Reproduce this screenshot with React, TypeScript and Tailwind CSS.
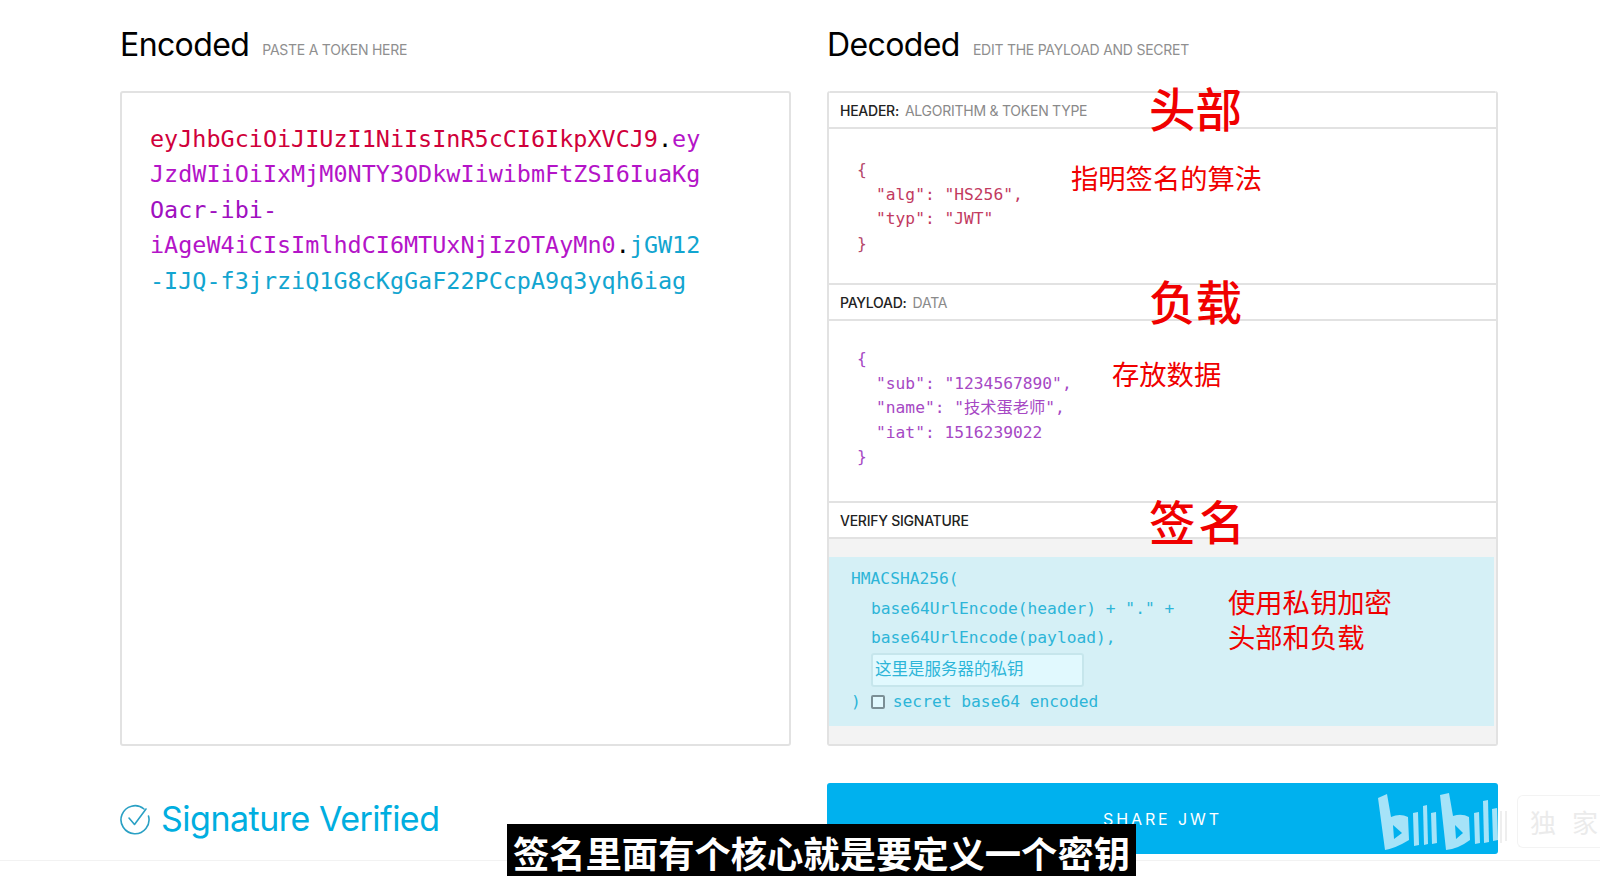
import React from "react";

const mono = "font-['DejaVu_Sans_Mono','Noto_Sans_CJK_SC',monospace]";
const sans = "font-['Inter','Noto_Sans_CJK_SC',sans-serif]";
const cjk = "font-['Noto_Sans_CJK_SC',sans-serif]";

const SectionHead = ({ title, sub }: { title: string; sub?: string }) => (
  <div className="h-[38px] shrink-0 flex items-center px-[11px] border-y-2 border-[#e2e2e2] bg-white text-[14px] tracking-[-0.25px]">
    <span className="text-[#222] font-medium">{title}</span>
    {sub && <span className="ml-[6px] text-[#8a8a8a]">{sub}</span>}
  </div>
);

const Heading = ({ title, sub }: { title: string; sub: string }) => (
  <div className={`h-[91px] flex items-end pb-[30px] ${sans}`}>
    <h2 className="text-[32px] leading-[32px] text-black tracking-[-0.6px]">{title}</h2>
    <span className="ml-[13px] mb-[2px] text-[14px] leading-[18px] text-[#8f8f8f] tracking-[-0.25px]">{sub}</span>
  </div>
);

const BiliLogo = () => (
  <svg width="120" height="58" viewBox="0 0 120 58" fill="#a6e3f8" className="absolute right-0 top-[10px] overflow-visible">
    <path d="M0 5 L9 1 L13 24 Q22 20 30 24 L31 47 Q18 55 7 57 Z M15 32 L16 46 L24 40 Z" fillRule="evenodd" />
    <path d="M35 20 L40 19 L41 52 L36 53 Z" />
    <path d="M45 13 L49 12 L50 51 L46 52 Z" />
    <path d="M53 20 L58 19 L59 50 L54 51 Z" />
    <path d="M62 2 L71 0 L75 23 Q84 20 91 24 L92 47 Q80 56 68 57 Z M77 32 L78 46 L85 40 Z" fillRule="evenodd" />
    <path d="M96 20 L101 19 L102 50 L97 51 Z" />
    <path d="M105 8 L110 7 L111 49 L106 50 Z" />
    <path d="M114 16 L119 15 L120 47 L115 48 Z" />
    <path d="M122 18 L124 18 L124 50 L122 50 Z M127 18 L129 18 L129 48 L127 48 Z" fill="#eeeeee" />
  </svg>
);

export default function App() {
  return (
    <div className="relative h-[876px] w-full overflow-hidden bg-white">
      <div className="grid grid-cols-[671px_671px] gap-x-[36px] pl-[120px]">
        <div>
          <Heading title="Encoded" sub="PASTE A TOKEN HERE" />
          <div className={`h-[655px] rounded-[3px] border-2 border-[#e2e2e2] pt-[29px] pl-[28px] text-[23.45px] leading-[35.4px] ${mono}`}>
            <div><span className="text-[#d0003a]">eyJhbGciOiJIUzI1NiIsInR5cCI6IkpXVCJ9</span><span className="text-black">.</span><span className="text-[#b414c8]">ey</span></div>
            <div className="text-[#b414c8]">JzdWIiOiIxMjM0NTY3ODkwIiwibmFtZSI6IuaKg</div>
            <div className="text-[#a010c0]">Oacr-ibi-</div>
            <div><span className="text-[#b414c8]">iAgeW4iCIsImlhdCI6MTUxNjIzOTAyMn0</span><span className="text-black">.</span><span className="text-[#12a5d0]">jGW12</span></div>
            <div className="text-[#12a5d0]">-IJQ-f3jrziQ1G8cKgGaF22PCcpA9q3yqh6iag</div>
          </div>
        </div>

        <div>
          <Heading title="Decoded" sub="EDIT THE PAYLOAD AND SECRET" />
          <div className={`h-[655px] flex flex-col overflow-hidden rounded-[3px] border-x-2 border-b-2 border-[#e2e2e2] ${sans}`}>
            <SectionHead title="HEADER:" sub="ALGORITHM & TOKEN TYPE" />
            <div className={`h-[154px] shrink-0 pt-[29px] pl-[28px] text-[16.25px] leading-[24.6px] text-[#c23a5f] ${mono}`}>
              <div className="text-[#b5476a]">{"{"}</div>
              <div className="pl-[19px]">"alg": "HS256",</div>
              <div className="pl-[19px]">"typ": "JWT"</div>
              <div className="text-[#b5476a]">{"}"}</div>
            </div>
            <SectionHead title="PAYLOAD:" sub="DATA" />
            <div className={`h-[180px] shrink-0 pt-[26px] pl-[28px] text-[16.25px] leading-[24.6px] text-[#a648c4] ${mono}`}>
              <div>{"{"}</div>
              <div className="pl-[19px]">"sub": "1234567890",</div>
              <div className="pl-[19px]">"name": "技术蛋老师",</div>
              <div className="pl-[19px]">"iat": 1516239022</div>
              <div>{"}"}</div>
            </div>
            <SectionHead title="VERIFY SIGNATURE" />
            <div className="h-[205px] shrink-0 bg-[#f3f3f3] pt-[18px] pb-[18px] pr-[2px]">
              <div className={`h-[169px] bg-[#d5f0f6] pl-[22px] pt-[7px] text-[16.25px] leading-[29.6px] text-[#2db5d8] ${mono}`}>
                <div>HMACSHA256(</div>
                <div className="pl-[20px]">base64UrlEncode(header) + "." +</div>
                <div className="pl-[20px]">base64UrlEncode(payload),</div>
                <div className="ml-[20px] flex h-[34px] w-[213px] items-center rounded-[3px] border-2 border-[#c6e6ec] bg-[#e1f9fe] pl-[2px] text-[16.5px]">这里是服务器的私钥</div>
                <div className="flex items-center">
                  <span>)</span>
                  <span className="ml-[10px] mr-[8px] h-[14px] w-[14px] rounded-[2px] border-2 border-[#7b8f95] bg-[#e1f9fe]" />
                  <span>secret base64 encoded</span>
                </div>
              </div>
            </div>
          </div>
        </div>

        <div className={`mt-[37px] flex h-[71px] items-center ${sans}`}>
          <svg width="30" height="32" viewBox="0 0 30 32" fill="none" stroke="#2aa0c4" strokeWidth="1.6" strokeLinecap="round" strokeLinejoin="round">
            <path d="M24 6 A14 14 0 1 0 28.5 13" />
            <path d="M9 15 L14.5 21.5 L26 6" />
          </svg>
          <span className="ml-[11px] text-[34px] leading-[40px] tracking-[-0.5px] text-[#00aee0]">Signature Verified</span>
        </div>

        <div className="relative mt-[37px]">
          <div className={`flex h-[71px] items-center justify-center rounded-[3px] bg-[#00b1ee] text-[16px] tracking-[2.9px] text-white ${sans}`}>
            SHARE JWT
          </div>
          <BiliLogo />
        </div>
      </div>

      <div className="absolute inset-x-0 top-[860px] border-t border-[#f2f2f2]" />

      {/* red annotations drawn over the page */}
      <div className={`text-[#f00000] ${cjk}`}>
        <span className="absolute left-[1149px] top-[72px] text-[46.5px] font-medium leading-[70px]">头部</span>
        <span className="absolute left-[1071px] top-[157px] text-[27.3px] leading-[40px]">指明签名的算法</span>
        <span className="absolute left-[1149px] top-[265px] text-[46.5px] font-medium leading-[70px]">负载</span>
        <span className="absolute left-[1112px] top-[353px] text-[27.3px] leading-[40px]">存放数据</span>
        <span className="absolute left-[1149px] top-[485px] text-[46.5px] font-medium tracking-[3px] leading-[70px]">签名</span>
        <span className="absolute left-[1228px] top-[584px] text-[27.3px] leading-[34.5px]">
          使用私钥加密
          <br />
          头部和负载
        </span>
      </div>

      {/* burned-in subtitle */}
      <div className={`absolute left-[507px] top-[824px] flex h-[52px] w-[629px] items-center justify-center bg-black pt-[5px] text-[36.3px] font-bold leading-none text-white ${cjk}`}>
        签名里面有个核心就是要定义一个密钥
      </div>

      {/* video watermark */}
      <div className={`absolute left-[1517px] top-[795px] flex h-[53px] w-[83px] items-center gap-x-[16px] whitespace-nowrap rounded-l-[6px] border-y border-l border-[#f3f3f3] pl-[12px] text-[26px] leading-none text-[#ebebeb] ${cjk}`}>
        <span>独</span>
        <span>家</span>
      </div>
    </div>
  );
}
